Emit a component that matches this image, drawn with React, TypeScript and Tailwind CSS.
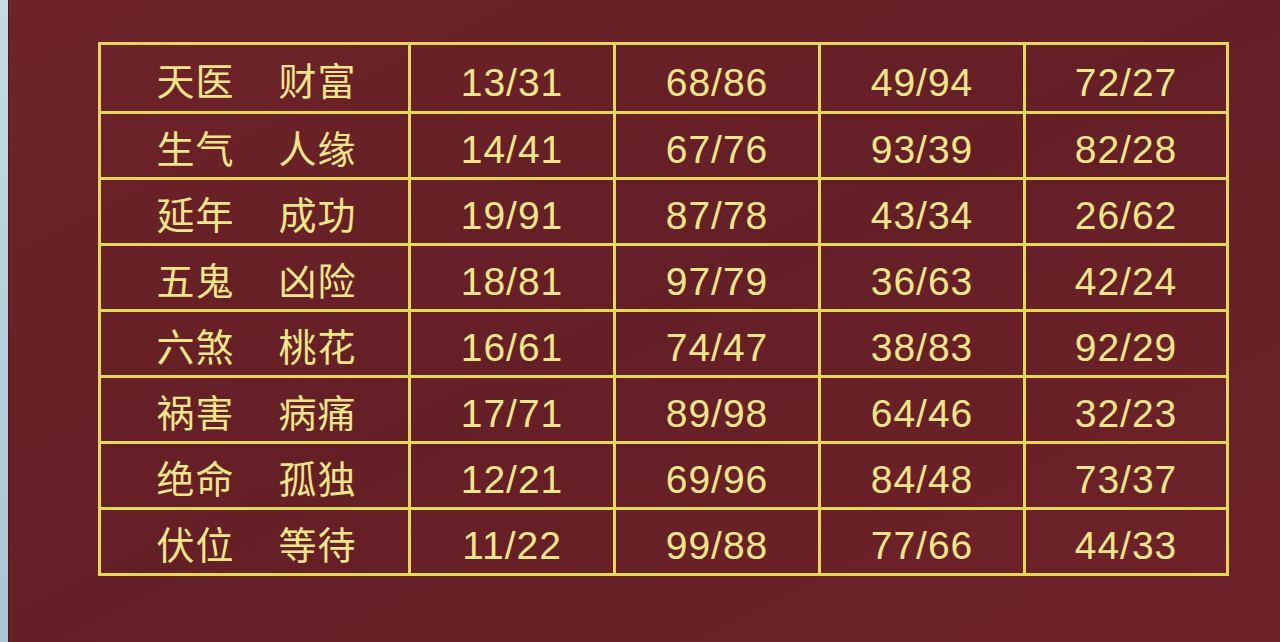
const ROWS = [
  { a: "天医", b: "财富", n: ["13/31", "68/86", "49/94", "72/27"] },
  { a: "生气", b: "人缘", n: ["14/41", "67/76", "93/39", "82/28"] },
  { a: "延年", b: "成功", n: ["19/91", "87/78", "43/34", "26/62"] },
  { a: "五鬼", b: "凶险", n: ["18/81", "97/79", "36/63", "42/24"] },
  { a: "六煞", b: "桃花", n: ["16/61", "74/47", "38/83", "92/29"] },
  { a: "祸害", b: "病痛", n: ["17/71", "89/98", "64/46", "32/23"] },
  { a: "绝命", b: "孤独", n: ["12/21", "69/96", "84/48", "73/37"] },
  { a: "伏位", b: "等待", n: ["11/22", "99/88", "77/66", "44/33"] },
];

export default function App() {
  return (
    <div className="flex w-[1280px] h-[642px] overflow-hidden bg-[#6a2128]">
      <div className="w-[9px] shrink-0 bg-gradient-to-b from-[#c4dbe4] to-[#a9c6d2] border-r border-[#4a1a20]" />
      <div className="flex-1 pl-[89px] pt-[42px] bg-gradient-to-br from-[#6d2329] via-[#651f26] to-[#6e2329]">
        <div className="w-[1131px] border-[3px] border-[#e3d85a]">
          {ROWS.map((r, i) => (
            <div
              key={i}
              className={`grid grid-cols-[307px_205px_205px_205px_203px] h-[66px] ${i > 0 ? "border-t-[3px] border-[#e3d85a]" : ""}`}
            >
              <div className="flex items-center justify-center gap-[44px] pl-[4px] pt-[2px] text-[38px] leading-none text-[#f1e58a] font-['Noto_Sans_CJK_SC',sans-serif]">
                <span className="tracking-[1px]">{r.a}</span>
                <span className="tracking-[1px]">{r.b}</span>
              </div>
              {r.n.map((n, j) => (
                <div
                  key={j}
                  className="flex items-center justify-center pt-[8px] border-l-[3px] border-[#e3d85a] text-[39px] leading-none tracking-[1px] text-[#f1e58a] font-['Liberation_Sans',Arial,sans-serif]"
                >
                  {n}
                </div>
              ))}
            </div>
          ))}
        </div>
      </div>
    </div>
  );
}
